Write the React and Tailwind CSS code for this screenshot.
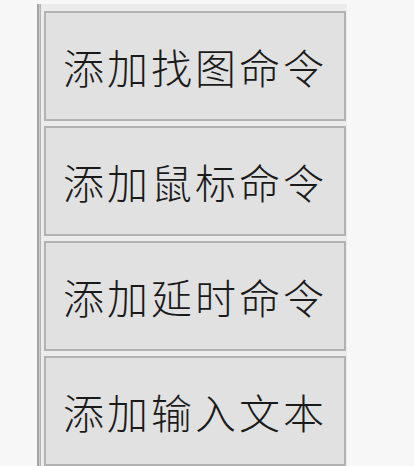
import React from 'react';

const commands = ['添加找图命令', '添加鼠标命令', '添加延时命令', '添加输入文本'];

const App = () => {
  return (
    <div className="w-[414px] h-[466px] overflow-hidden bg-[#f7f7f7] flex">
      <div className="ml-[37px] mt-[4px] flex">
        {/* panel edge */}
        <div className="w-[2px] bg-[#a3a3a3]" />
        <div className="w-[1px] bg-[#cfcfcf]" />
        <div className="w-[1px] bg-[#b5b5b5]" />
        <div className="pl-[3px] pt-[7px] pr-[1px] bg-[#ececec] flex flex-col gap-[5px]">
          {commands.map((label) => (
            <button
              key={label}
              className="w-[302px] h-[110px] shrink-0 border-2 border-[#b2b2b2] bg-[#e1e1e1] flex items-center justify-center text-[#1a1a1a] text-[41px] font-light tracking-[3px] leading-none"
              style={{ fontFamily: '"Noto Sans CJK SC", "Noto Sans", sans-serif' }}
            >
              {label}
            </button>
          ))}
        </div>
      </div>
    </div>
  );
};

export default App;
